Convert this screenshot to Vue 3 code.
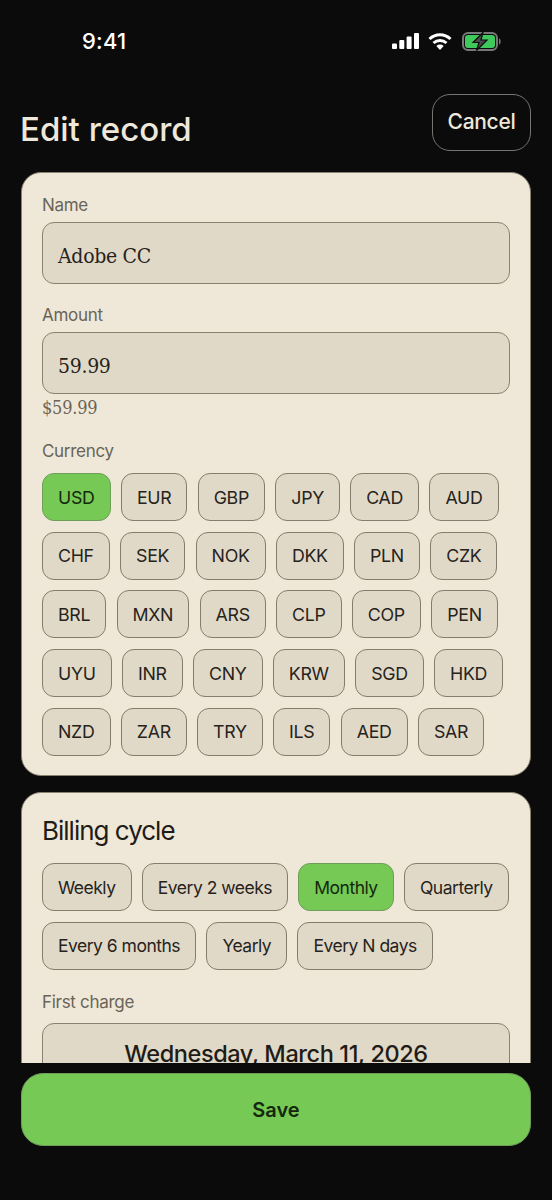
<script setup>
const currencyRows = [
  ['USD', 'EUR', 'GBP', 'JPY', 'CAD', 'AUD'],
  ['CHF', 'SEK', 'NOK', 'DKK', 'PLN', 'CZK'],
  ['BRL', 'MXN', 'ARS', 'CLP', 'COP', 'PEN'],
  ['UYU', 'INR', 'CNY', 'KRW', 'SGD', 'HKD'],
  ['NZD', 'ZAR', 'TRY', 'ILS', 'AED', 'SAR'],
]
const cycleRows = [
  ['Weekly', 'Every 2 weeks', 'Monthly', 'Quarterly'],
  ['Every 6 months', 'Yearly', 'Every N days'],
]
</script>

<template>
  <div class="screen">
    <div class="status">
      <span class="time">9:41</span>
      <div class="status-icons">
        <svg class="signal" width="27" height="16" viewBox="0 0 27 16" fill="#fff">
          <rect x="0" y="10.500" width="5" height="5.500" rx="1" />
          <rect x="7.300" y="7" width="5" height="9" rx="1" />
          <rect x="14.600" y="3.500" width="5" height="12.500" rx="1" />
          <rect x="22" y="0" width="5" height="16" rx="1" />
        </svg>
        <svg class="wifi" width="24" height="17" viewBox="0 0 24 17" fill="none" stroke="#fff" stroke-width="3">
          <path d="M1.500 6C7.500 .4 16.500 .4 22.500 6" />
          <path d="M5.500 10C9.300 6.600 14.700 6.600 18.500 10" />
          <path d="M12 17 8.300 13a5.400 5.400 0 0 1 7.400 0Z" fill="#fff" stroke="none" />
        </svg>
        <svg width="40" height="19" viewBox="0 0 40 19">
          <rect x="1" y="1" width="34" height="17" rx="5" fill="none" stroke="#77787a" stroke-width="2" />
          <rect x="3" y="3" width="30" height="13" rx="3" fill="#3ec95c" />
          <path d="M37 6.500c2.200 .4 2.200 5.600 0 6Z" fill="#77787a" />
          <path d="M21 0.500 11 10.500h6L14.500 18.500 25 8h-6Z" fill="#4a4a4a" stroke="#0b0b0b" stroke-width="1.200" />
        </svg>
      </div>
    </div>

    <div class="scroll">
      <header class="head">
        <h1>Edit record</h1>
        <button class="cancel">Cancel</button>
      </header>

      <section class="card first">
        <label class="label">Name</label>
        <div class="input">Adobe CC</div>
        <label class="label amount">Amount</label>
        <div class="input">59.99</div>
        <div class="hint">$59.99</div>
        <label class="label currency">Currency</label>
        <div class="rows">
          <div v-for="(row, i) in currencyRows" :key="i" class="row">
            <button v-for="c in row" :key="c" class="chip" :class="{ on: c === 'USD' }">{{ c }}</button>
          </div>
        </div>
      </section>

      <section class="card second">
        <h2>Billing cycle</h2>
        <div class="rows cycle">
          <div v-for="(row, i) in cycleRows" :key="i" class="row">
            <button v-for="c in row" :key="c" class="chip" :class="{ on: c === 'Monthly' }">{{ c }}</button>
          </div>
        </div>
        <label class="label charge">First charge</label>
        <div class="date"><span>Wednesday, March 11, 2026</span></div>
      </section>
    </div>

    <footer class="foot">
      <button class="save">Save</button>
    </footer>
  </div>
</template>

<style>
html, body { margin: 0; background: #0b0b0b; }
</style>

<style scoped>
.screen {
  width: 552px;
  height: 1200px;
  background: #0b0b0b;
  display: flex;
  flex-direction: column;
  font-family: "Inter", "Liberation Sans", sans-serif;
  overflow: hidden;
}
.status {
  height: 80px;
  flex: none;
  display: flex;
  justify-content: space-between;
  align-items: center;
  padding: 2px 50px 0 82px;
  box-sizing: border-box;
}
.time { color: #fff; font-size: 22px; font-weight: 500; letter-spacing: 0.2px; }
.status-icons { display: flex; align-items: center; }
.signal { margin-right: 9px; }
.wifi { margin-right: 10px; }
.scroll {
  flex: 1;
  min-height: 0;
  overflow: hidden;
  padding: 14px 21px 0;
}
.head {
  display: flex;
  justify-content: space-between;
  align-items: flex-start;
  margin-bottom: 21px;
}
h1 {
  margin: 15px 0 0 -1px;
  color: #eee8da;
  font-size: 33px;
  line-height: 40px;
  font-weight: 500;
  letter-spacing: 0;
}
.cancel {
  width: 99px;
  height: 57px;
  background: transparent;
  border: 1.500px solid #77756f;
  border-radius: 18px;
  color: #eee8da;
  font: 500 21px "Inter", sans-serif;
  letter-spacing: -0.3px;
  padding: 0 0 2px;
}
.card {
  background: #efe8d9;
  border: 1.500px solid #8a8270;
  border-radius: 20px;
  box-sizing: border-box;
  padding: 21px 20px;
}
.first { height: 604px; margin-bottom: 16px; }
.second { height: 400px; padding-top: 20px; }
.label {
  display: block;
  color: #6a6457;
  font-size: 17px;
  line-height: 22px;
  letter-spacing: -0.3px;
  margin-bottom: 6px;
}
.amount { margin-top: 20px; }
.currency { margin-top: 21px; margin-bottom: 11px; }
.charge { margin-top: 21px; margin-bottom: 10px; }
.input {
  height: 62px;
  box-sizing: border-box;
  background: #e1d9c7;
  border: 1.500px solid #8a8270;
  border-radius: 12px;
  padding: 5px 15px 0;
  display: flex;
  align-items: center;
  color: #26231d;
  font-family: "DejaVu Serif Condensed", "DejaVu Serif", serif;
  font-size: 21px;
  letter-spacing: -0.3px;
}
.hint {
  color: #6a6457;
  font-family: "DejaVu Serif Condensed", "DejaVu Serif", serif;
  font-size: 18px;
  line-height: 22px;
  letter-spacing: -0.2px;
  margin-top: 3px;
}
.rows { display: flex; flex-direction: column; gap: 10.700px; }
.row { display: flex; gap: 10.300px; }
.chip {
  height: 48px;
  padding: 0 15px;
  box-sizing: border-box;
  background: #e1d9c7;
  border: 1.500px solid #857d6b;
  border-radius: 12px;
  color: #26231d;
  font: 400 17.800px "Inter", sans-serif;
  letter-spacing: -0.3px;
  white-space: nowrap;
}
.cycle .chip { font-size: 17.500px; letter-spacing: -0.5px; }
.chip.on { background: #76c955; border-color: #6f9e58; color: #14280c; }
h2 {
  margin: 0 0 14px;
  color: #1f1c17;
  font-size: 26px;
  line-height: 36px;
  font-weight: 400;
  letter-spacing: -1px;
}
.date {
  height: 62px;
  box-sizing: border-box;
  background: #e1d9c7;
  border: 1.500px solid #8a8270;
  border-radius: 12px;
  display: flex;
  justify-content: center;
  align-items: center;
  color: #1f1c17;
  font-size: 23.500px;
  font-weight: 500;
  letter-spacing: -0.4px;
  white-space: nowrap;
}
.foot { flex: none; padding: 10px 21px 54px; }
.save {
  width: 100%;
  height: 73px;
  display: block;
  background: #76c955;
  border: 1.500px solid #6f9e58;
  border-radius: 22px;
  color: #14280c;
  font: 600 20px "Inter", sans-serif;
}
</style>
